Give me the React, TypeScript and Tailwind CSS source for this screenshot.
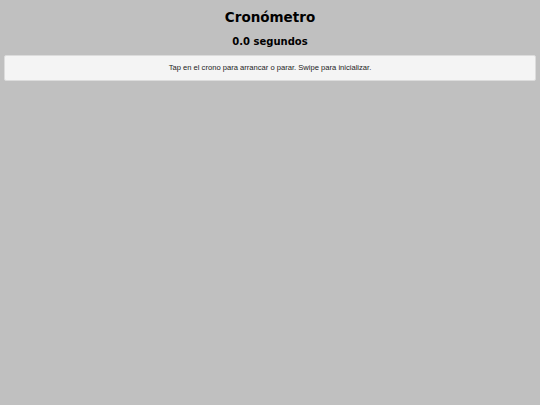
export default function App() {
  return (
    <div className="min-h-[405px] bg-[#c0c0c0] pt-[7px] px-1 font-['DejaVu_Sans',sans-serif] text-black">
      <h1 className="text-center text-[13.5px] font-bold leading-[20px]">Cronómetro</h1>
      <h2 className="mt-[5px] text-center text-[10px] font-bold leading-[20px]">0.0 segundos</h2>
      <div className="mt-[3px] h-[26px] flex items-center justify-center bg-[#f4f4f4] border border-[#dcdcdc] rounded-[2px]">
        <p className="text-[7.6px] font-['Liberation_Sans',sans-serif] text-[#222]">
          Tap en el crono para arrancar o parar. Swipe para inicializar.
        </p>
      </div>
    </div>
  );
}
